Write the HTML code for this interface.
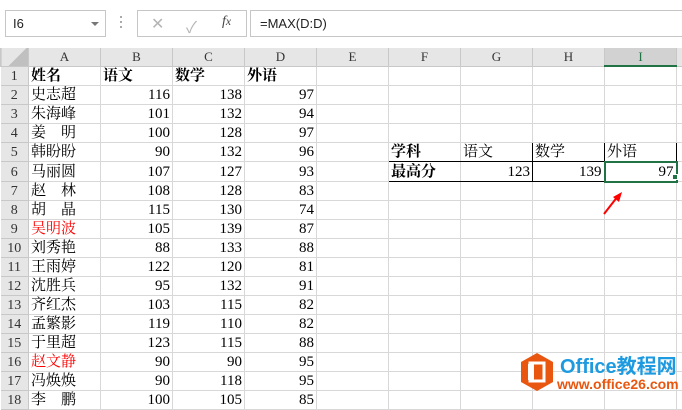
<!DOCTYPE html>
<html><head><meta charset="utf-8"><style>
*{margin:0;padding:0;box-sizing:border-box}
body{width:682px;height:401px;overflow:hidden;background:#fff;font-family:"Liberation Sans","Noto Sans CJK SC",sans-serif;position:relative}
.top{position:absolute;left:0;top:0;width:682px;height:48px;background:#fff}
.nb{position:absolute;left:5px;top:10px;width:101px;height:27px;border:1px solid #c6c6c6;font-size:13px;line-height:25px;padding-left:7px;color:#222}
.nb:after{content:"";position:absolute;right:6px;top:11px;border-left:4px solid transparent;border-right:4px solid transparent;border-top:4px solid #777}
.dots{position:absolute;left:120px;top:16px;width:2px;height:14px;background:repeating-linear-gradient(#aaa 0 2px,transparent 2px 5px)}
.ic{position:absolute;left:137px;top:10px;width:110px;height:27px;border:1px solid #c6c6c6;color:#b5b5b5;font-size:16px}
.fx{position:absolute;left:250px;top:10px;width:432px;height:27px;border:1px solid #c6c6c6;border-right:none;font-size:13px;line-height:25px;padding-left:9px;color:#222}
table{position:absolute;left:0;top:48px;width:696px;border-collapse:collapse;table-layout:fixed;font-family:"Liberation Serif","Noto Serif CJK SC",serif;font-size:15px}
td{border:1px solid #d8d8d8;height:19px;padding:1px 2px 0;white-space:nowrap;overflow:hidden;line-height:17px}
tr{height:19px}
tr.h td{background:#e6e6e6;height:18px;padding-top:0;text-align:center;font-size:13px;color:#333;border-color:#c8c8c8;border-top:none}
tr.h{height:18px}
td.r{background:#e6e6e6;text-align:center;font-size:14px;color:#333;border-color:#c8c8c8;border-left:none}
.n{text-align:right}
.b{font-weight:bold}
.red{color:#f00}
.bx{border:1px solid #000}
.bb{border-bottom:1px solid #000}
</style></head><body>
<div class="top"></div>
<div class="nb">I6</div>
<div class="dots"></div>
<div class="ic"><span style="position:absolute;left:13px;top:3px">✕</span><span style="position:absolute;left:48px;top:3px">✓</span><span style="position:absolute;left:84px;top:3px;color:#444;font-style:italic;font-family:'Liberation Serif',serif;font-size:14px">f<small>x</small></span></div>
<div class="fx">=MAX(D:D)</div>
<table>
<colgroup><col style="width:28px"><col style="width:72px"><col style="width:72px"><col style="width:72px"><col style="width:72px"><col style="width:72px"><col style="width:72px"><col style="width:72px"><col style="width:72px"><col style="width:72px"><col style="width:20px"></colgroup>
<tr class="h"><td style="background:linear-gradient(135deg,#e6e6e6 55%,#c0c0c0 56%)"></td><td>A</td><td>B</td><td>C</td><td>D</td><td>E</td><td>F</td><td>G</td><td>H</td><td style="background:#d2d2d2;color:#217346;border-bottom:2px solid #217346">I</td><td></td></tr>
<tr><td class="r">1</td><td class="b">姓名</td><td class="b">语文</td><td class="b">数学</td><td class="b">外语</td><td></td><td></td><td></td><td></td><td></td><td></td></tr>
<tr><td class="r">2</td><td>史志超</td><td class="n">116</td><td class="n">138</td><td class="n">97</td><td></td><td></td><td></td><td></td><td></td><td></td></tr>
<tr><td class="r">3</td><td>朱海峰</td><td class="n">101</td><td class="n">132</td><td class="n">94</td><td></td><td></td><td></td><td></td><td></td><td></td></tr>
<tr><td class="r">4</td><td>姜　明</td><td class="n">100</td><td class="n">128</td><td class="n">97</td><td></td><td></td><td></td><td></td><td></td><td></td></tr>
<tr><td class="r">5</td><td>韩盼盼</td><td class="n">90</td><td class="n">132</td><td class="n">96</td><td></td><td class="b bb">学科</td><td class="bx">语文</td><td class="bx">数学</td><td class="bx">外语</td><td></td></tr>
<tr><td class="r">6</td><td>马丽圆</td><td class="n">107</td><td class="n">127</td><td class="n">93</td><td></td><td class="b bb">最高分</td><td class="n bx">123</td><td class="n bx">139</td><td class="n" style="border:2px solid #217346">97</td><td></td></tr>
<tr><td class="r">7</td><td>赵　林</td><td class="n">108</td><td class="n">128</td><td class="n">83</td><td></td><td></td><td></td><td></td><td></td><td></td></tr>
<tr><td class="r">8</td><td>胡　晶</td><td class="n">115</td><td class="n">130</td><td class="n">74</td><td></td><td></td><td></td><td></td><td></td><td></td></tr>
<tr><td class="r">9</td><td class="red">吴明波</td><td class="n">105</td><td class="n">139</td><td class="n">87</td><td></td><td></td><td></td><td></td><td></td><td></td></tr>
<tr><td class="r">10</td><td>刘秀艳</td><td class="n">88</td><td class="n">133</td><td class="n">88</td><td></td><td></td><td></td><td></td><td></td><td></td></tr>
<tr><td class="r">11</td><td>王雨婷</td><td class="n">122</td><td class="n">120</td><td class="n">81</td><td></td><td></td><td></td><td></td><td></td><td></td></tr>
<tr><td class="r">12</td><td>沈胜兵</td><td class="n">95</td><td class="n">132</td><td class="n">91</td><td></td><td></td><td></td><td></td><td></td><td></td></tr>
<tr><td class="r">13</td><td>齐红杰</td><td class="n">103</td><td class="n">115</td><td class="n">82</td><td></td><td></td><td></td><td></td><td></td><td></td></tr>
<tr><td class="r">14</td><td>孟繁影</td><td class="n">119</td><td class="n">110</td><td class="n">82</td><td></td><td></td><td></td><td></td><td></td><td></td></tr>
<tr><td class="r">15</td><td>于里超</td><td class="n">123</td><td class="n">115</td><td class="n">88</td><td></td><td></td><td></td><td></td><td></td><td></td></tr>
<tr><td class="r">16</td><td class="red">赵文静</td><td class="n">90</td><td class="n">90</td><td class="n">95</td><td></td><td></td><td></td><td></td><td></td><td></td></tr>
<tr><td class="r">17</td><td>冯焕焕</td><td class="n">90</td><td class="n">118</td><td class="n">95</td><td></td><td></td><td></td><td></td><td></td><td></td></tr>
<tr><td class="r">18</td><td>李　鹏</td><td class="n">100</td><td class="n">105</td><td class="n">85</td><td></td><td></td><td></td><td></td><td></td><td></td></tr>
</table>
<div style="position:absolute;left:672px;top:174px;width:6px;height:6px;background:#217346;border:1px solid #fff"></div>
<svg style="position:absolute;left:600px;top:190px" width="30" height="30"><line x1="4" y1="24" x2="18" y2="6" stroke="#f00" stroke-width="2"/><polygon points="22,2 13,7 19,12" fill="#f00"/></svg>
<svg style="position:absolute;left:519px;top:352px" width="36" height="40"><polygon points="18,1 34,10 34,30 18,39 2,30 2,10" fill="#e8560f"/><rect x="11" y="11" width="14" height="18" fill="none" stroke="#fff" stroke-width="3"/><rect x="9" y="12" width="6" height="16" fill="#fff"/></svg>
<div style="position:absolute;left:560px;top:350px;font:bold 20px 'Liberation Sans','Noto Sans CJK SC',sans-serif;color:#1e9be0">Office教程网</div>
<div style="position:absolute;left:557px;top:376px;font:bold 14px 'Liberation Sans',sans-serif;color:#e8560f">www.office26.com</div>
</body></html>
